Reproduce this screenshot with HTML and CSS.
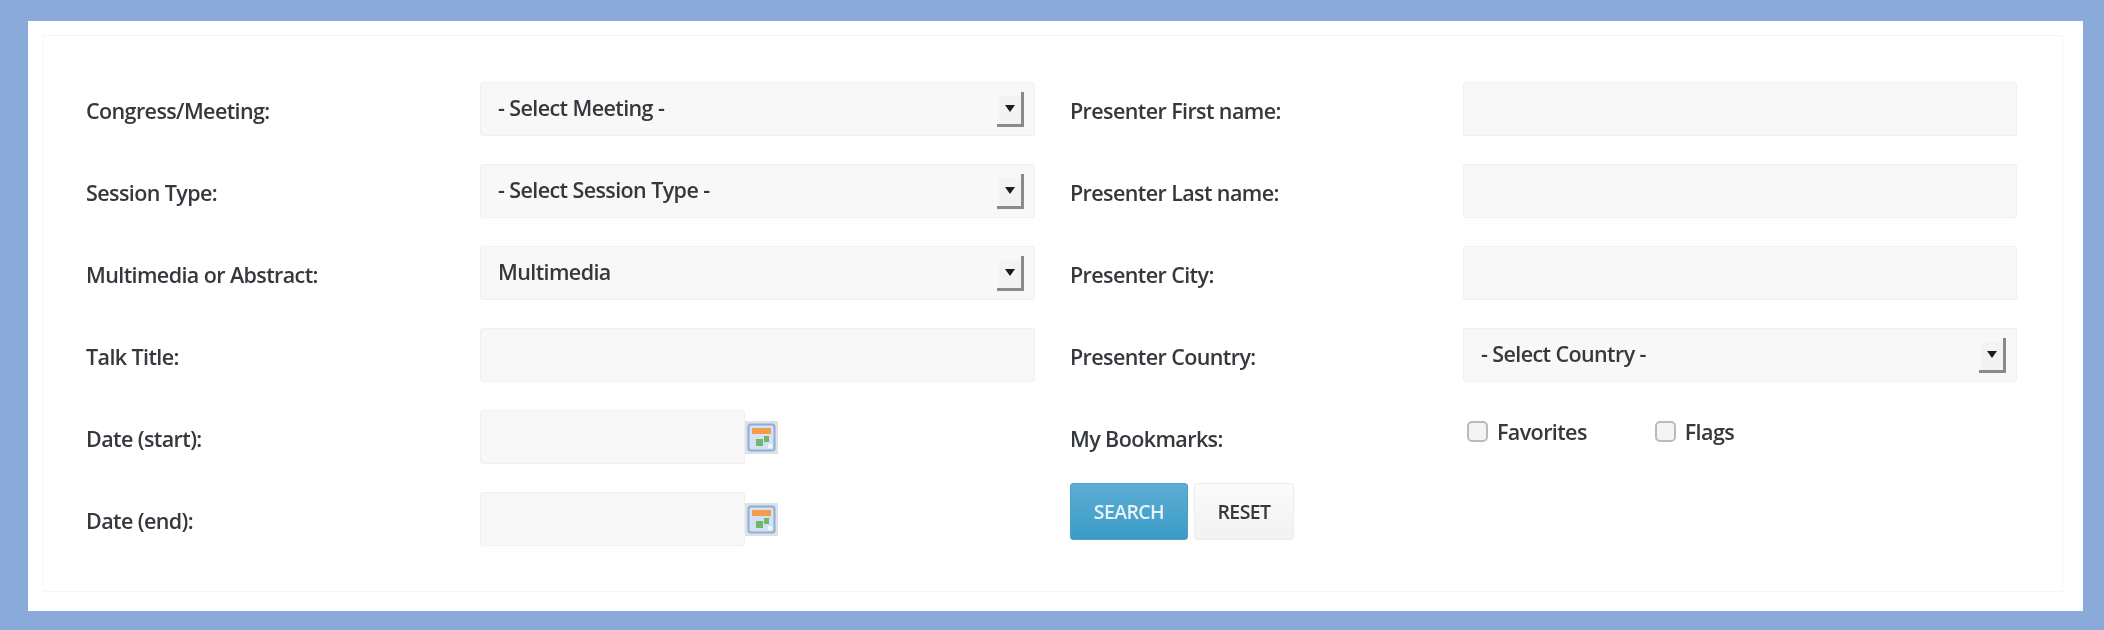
FILE: index.html
```html
<!DOCTYPE html>
<html lang="en">
<head>
<meta charset="utf-8">
<title>Search</title>
<link rel="stylesheet" href="styles.css">
</head>
<body>
<svg class="defs" width="0" height="0" aria-hidden="true">
  <symbol id="arrow" viewBox="0 0 28 35">
    <rect x="2" y="4" width="23" height="29" fill="#f3f3f3"/>
    <path d="M25.5 0V33.5H0" fill="none" stroke="#8a8a8a" stroke-width="3"/>
    <path d="M8 13H18L13 20Z" fill="#1c1c1c"/>
  </symbol>
  <symbol id="cal" viewBox="0 0 33 33">
    <rect width="33" height="33" fill="#dfe0e3"/>
    <rect x="3.5" y="3.5" width="26" height="26" rx="2.5" fill="#d3e2f2" stroke="#8fadd6" stroke-width="2"/>
    <rect x="7" y="7" width="19" height="6" fill="#f59b4c"/>
    <rect x="11" y="18" width="7" height="7" fill="#72b56e"/>
    <rect x="19" y="15" width="5" height="6" fill="#72b56e"/>
    <rect x="23" y="23" width="4" height="4" fill="#f2f6fb"/>
  </symbol>
</svg>
<main class="sheet">
  <form class="panel">
    <div class="col">
      <div class="row"><label class="lbl">Congress/Meeting:</label>
        <div class="sel"><select class="field"><option>- Select Meeting -</option></select><svg class="arr"><use href="#arrow"/></svg></div></div>
      <div class="row"><label class="lbl">Session Type:</label>
        <div class="sel"><select class="field"><option>- Select Session Type -</option></select><svg class="arr"><use href="#arrow"/></svg></div></div>
      <div class="row"><label class="lbl">Multimedia or Abstract:</label>
        <div class="sel"><select class="field"><option>Multimedia</option></select><svg class="arr"><use href="#arrow"/></svg></div></div>
      <div class="row"><label class="lbl">Talk Title:</label><input class="field" type="text"></div>
      <div class="row"><label class="lbl">Date (start):</label><input class="field date" type="text"><svg class="cal"><use href="#cal"/></svg></div>
      <div class="row"><label class="lbl">Date (end):</label><input class="field date" type="text"><svg class="cal"><use href="#cal"/></svg></div>
    </div>
    <div class="col">
      <div class="row"><label class="lbl">Presenter First name:</label><input class="field" type="text"></div>
      <div class="row"><label class="lbl">Presenter Last name:</label><input class="field" type="text"></div>
      <div class="row"><label class="lbl">Presenter City:</label><input class="field" type="text"></div>
      <div class="row"><label class="lbl">Presenter Country:</label>
        <div class="sel"><select class="field"><option>- Select Country -</option></select><svg class="arr"><use href="#arrow"/></svg></div></div>
      <div class="row marks"><label class="lbl">My Bookmarks:</label>
        <div class="checks">
          <label class="chk fav"><input type="checkbox">Favorites</label>
          <label class="chk"><input type="checkbox">Flags</label>
        </div></div>
      <div class="btns"><button class="btn go" type="button">SEARCH</button><button class="btn" type="button">RESET</button></div>
    </div>
  </form>
</main>
</body>
</html>
```

FILE: styles.css
```css
html, body { margin: 0; padding: 0; }
body {
  background: #8aabd9;
  width: 2104px;
  height: 630px;
  overflow: hidden;
  font-family: "Open Sans", sans-serif;
  color: #35393d;
}
.defs { display: block; height: 0; }
.sheet {
  box-sizing: border-box;
  width: 2055px;
  height: 590px;
  margin: 21px 0 0 28px;
  padding: 14px 20px 19px 15px;
  background: #fff;
  filter: blur(0.7px);
}
.panel {
  box-sizing: border-box;
  height: 100%;
  display: flex;
  gap: 35px;
  padding: 46px 45px 0 42px;
  border: 1px solid #f5f5f5;
}
.col { width: 949px; flex: none; }
.col + .col { width: 947px; }
.row {
  display: flex;
  align-items: center;
  height: 54px;
  margin-bottom: 28px;
}
.lbl {
  width: 394px;
  flex: none;
  padding-top: 2px;
  font-size: 21.5px;
  letter-spacing: -0.6px;
  font-weight: 600;
  white-space: nowrap;
}
.col + .col .lbl { width: 393px; }
.field {
  box-sizing: border-box;
  display: block;
  width: 100%;
  height: 54px;
  margin: 0;
  padding: 0 17px 4px;
  background: #f8f8f8;
  border: 1px solid #f0f0f0;
  border-radius: 3px;
  font: 600 21.5px "Open Sans", sans-serif;
  letter-spacing: -0.6px;
  color: #35393d;
  appearance: none;
  outline: none;
}
.row > .field { flex: 1; }
.row > .field.date { flex: none; width: 265px; }
.sel { position: relative; flex: 1; }
.arr {
  position: absolute;
  right: 10px;
  top: 10px;
  width: 28px;
  height: 35px;
}
.cal { width: 33px; height: 33px; flex: none; }
.marks { height: 54px; margin-bottom: 19px; }
.checks { display: flex; align-items: center; margin-top: -11px; padding-left: 4px; }
.chk {
  display: flex;
  align-items: center;
  font-size: 21.5px;
  letter-spacing: -0.6px;
  font-weight: 600;
}
.fav { margin-right: 68px; }
.chk input {
  appearance: none;
  box-sizing: border-box;
  width: 21px;
  height: 21px;
  margin: 0 9px 0 0;
  background: #f4f4f4;
  border: 2px solid #bababa;
  border-radius: 5px;
}
.btns { display: flex; gap: 6px; }
.btn {
  box-sizing: border-box;
  width: 100px;
  height: 57px;
  padding: 0;
  background: linear-gradient(#fbfbfb, #f2f2f2);
  border: 1px solid #ececec;
  border-radius: 3px;
  font: 600 19.5px "Open Sans", sans-serif;
  letter-spacing: -0.6px;
  color: #35393d;
}
.btn.go {
  width: 118px;
  background: linear-gradient(#5dadd4, #3a9cc5);
  border-color: #4aa2ca;
  color: #e6f3f9;
}
```
